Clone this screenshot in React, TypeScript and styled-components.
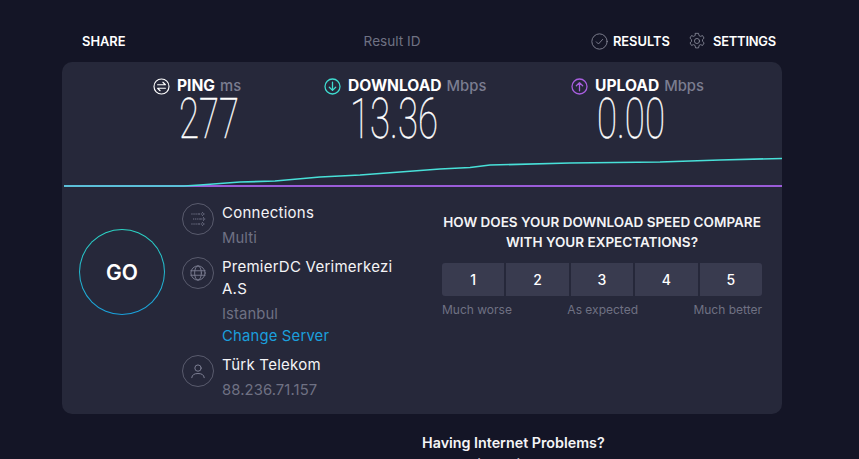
import React from "react";
import styled, { createGlobalStyle } from "styled-components";

const Global = createGlobalStyle`
  *, *::before, *::after { box-sizing: border-box; }
  html, body { margin: 0; padding: 0; height: 459px; overflow: hidden; background: #141526; }
  body { font-family: Inter, "Noto Sans", sans-serif; color: #fff; }
`;
const Page = styled.div`
  width: 720px;
  margin-left: 62px;
  height: 459px;
  overflow: hidden;
`;
const Header = styled.header`
  height: 62px;
  display: flex;
  justify-content: space-between;
  align-items: center;
  padding: 20px 6px 0 20px;
`;
const HeaderLeft = styled.div`
  display: flex;
  align-items: center;
`;
const NavLabel = styled.span<{ $tight?: boolean }>`
  font-size: 12.9px;
  font-weight: 600;
  color: #fff;
  letter-spacing: ${(p) => (p.$tight ? "-0.2px" : "0")};
`;
const ResultId = styled.span`
  font-size: 13.6px;
  color: #6f7183;
  margin-left: 238px;
`;
const Nav = styled.nav`
  display: flex;
  align-items: center;
  gap: 18px;
`;
const NavItem = styled.div<{ $gap: number }>`
  display: flex;
  align-items: center;
  gap: ${(p) => p.$gap}px;
`;
const Panel = styled.main`
  height: 352px;
  background: #26283a;
  border-radius: 10px;
  display: flex;
  flex-direction: column;
`;
const Stats = styled.section`
  display: grid;
  grid-template-columns: 171px 247px auto;
  padding: 14px 0 0 91px;
  height: 70px;
  flex-shrink: 0;
`;
const Stat = styled.div`
  display: grid;
  grid-template-columns: 24px auto;
  grid-template-rows: 20px 46px;
  justify-content: start;
  align-items: center;
`;
const StatIcon = styled.span`
  display: flex;
`;
const StatLabel = styled.div`
  display: flex;
  align-items: baseline;
  gap: 5px;
  font-size: 15.6px;
  font-weight: 700;
  line-height: 20px;
  white-space: nowrap;
`;
const Unit = styled.span`
  font-size: 14.8px;
  font-weight: 500;
  color: #7b7d90;
`;
const StatValue = styled.div`
  grid-column: 2;
  font-family: Roboto, sans-serif;
  font-weight: 100;
  font-size: 55px;
  line-height: 46px;
  color: #fff;
  transform: scaleX(0.665);
  transform-origin: left center;
  white-space: nowrap;
  width: 0;
  margin: 0 0 0 2px;
  -webkit-text-stroke: 0.4px #fff;
`;
const Chart = styled.svg`
  display: block;
  flex-shrink: 0;
  width: 720px;
  height: 56px;
  margin-top: -1px;
`;
const Body = styled.section`
  display: flex;
  flex: 1;
  padding: 0 20px 0 17px;
`;
const GoWrap = styled.div`
  width: 103px;
  padding-top: 42px;
`;
const Go = styled.button`
  width: 86px;
  height: 86px;
  border-radius: 50%;
  border: 1px solid transparent;
  background: linear-gradient(#26283a, #26283a) padding-box,
    linear-gradient(#2cd5c4, #1aa0dc) border-box;
  color: #fff;
  font-family: inherit;
  font-size: 21px;
  font-weight: 600;
  padding: 0;
`;
const Servers = styled.div`
  width: 260px;
  padding-top: 15px;
  display: flex;
  flex-direction: column;
  gap: 7px;
`;
const ServerRow = styled.div`
  display: grid;
  grid-template-columns: 32px 1fr;
  column-gap: 8px;
  align-items: start;
`;
const Round = styled.span`
  width: 32px;
  height: 32px;
  border: 1px solid #595b6d;
  border-radius: 50%;
  display: flex;
  align-items: center;
  justify-content: center;
  margin-top: 1px;
`;
const ServerText = styled.div`
  font-size: 15px;
  line-height: 22px;
  letter-spacing: 0.25px;
`;
const Name = styled.div`
  color: #f4f4f6;
  width: 190px;
`;
const Sub = styled.div`
  color: #6f7183;
  font-size: 14.8px;
  letter-spacing: 0.1px;
  margin-top: 3px;
`;
const Change = styled.div`
  color: #1b9fdc;
  font-size: 14.8px;
  letter-spacing: 0.2px;
`;
const Feedback = styled.div`
  width: 320px;
  padding-top: 25px;
`;
const Question = styled.h2`
  margin: 0;
  font-size: 13.5px;
  font-weight: 600;
  line-height: 20px;
  text-align: center;
  color: #f4f4f6;
  white-space: nowrap;
`;
const Scale = styled.div`
  display: grid;
  grid-template-columns: repeat(5, 1fr);
  gap: 2px;
  margin-top: 11px;
  border-radius: 3px;
  overflow: hidden;
`;
const ScaleBtn = styled.div`
  height: 33px;
  background: #393b4f;
  display: flex;
  align-items: center;
  justify-content: center;
  font-size: 14px;
  font-weight: 500;
`;
const ScaleLabels = styled.div`
  display: flex;
  justify-content: space-between;
  margin-top: 7px;
  font-size: 12px;
  line-height: 14px;
  color: #6f7183;
`;
const Help = styled.section`
  margin-top: 20px;
  padding-left: 360px;
  font-size: 14.3px;
  line-height: 18px;
`;
const HelpTitle = styled.div`
  font-weight: 600;
  color: #f4f4f6;
`;
const HelpLine = styled.div`
  color: #f4f4f6;
  font-size: 13px;
  margin-left: -22px;
  margin-top: 3px;
  white-space: nowrap;
`;

const Ic = ({ s, children, c }: { s: number; c: string; children: React.ReactNode }) => (
  <svg width={s} height={s} viewBox="0 0 24 24" fill="none" stroke={c} strokeWidth="1.3" strokeLinecap="round" strokeLinejoin="round">
    {children}
  </svg>
);

const PingIcon = () => (
  <Ic s={17} c="#fff">
    <circle cx="12" cy="12" r="10.6" strokeWidth="1.6" />
    <path d="M6.5 9.5h11L14 6M17.5 14.5h-11l3.5 3.5" strokeWidth="1.6" />
  </Ic>
);
const ArrowIcon = ({ c, up }: { c: string; up?: boolean }) => (
  <Ic s={17} c={c}>
    <circle cx="12" cy="12" r="10.6" strokeWidth="1.8" />
    <path d={up ? "M12 18V6.5M7.5 11 12 6.5l4.5 4.5" : "M12 6v11.5M7.5 13l4.5 4.5 4.5-4.5"} strokeWidth="1.8" />
  </Ic>
);

const teal = "M0 68 H120 L136 67 L176 64 L211 63 L256 59 L296 57 L336 54 L376 51 L406 49.5 L426 47 L506 45 L596 44 L656 42 L718 40.5";

export default function App() {
  return (
    <Page>
      <Global />
      <Header>
        <HeaderLeft>
          <NavLabel>SHARE</NavLabel>
          <ResultId>Result ID</ResultId>
        </HeaderLeft>
        <Nav>
          <NavItem $gap={5}>
            <Ic s={17} c="#8b8d9c">
              <circle cx="12" cy="12" r="10.8" strokeWidth="1.2" />
              <path d="M7.5 12.5l3 3 6-6.5" strokeWidth="1.2" />
            </Ic>
            <NavLabel>RESULTS</NavLabel>
          </NavItem>
          <NavItem $gap={7}>
            <Ic s={18} c="#8b8d9c">
              <path d="M10 1.800h4l.7 3 1.900 1 2.800-1 2 3.400-2.100 2 .1 2.300 2.100 2-2 3.400-2.800-1-1.900 1-.7 3.300h-4l-.7-3.300-1.900-1-2.800 1-2-3.400 2.100-2-.1-2.300-2.100-2 2-3.400 2.800 1 1.900-1z" strokeWidth="1.100" />
              <circle cx="12" cy="12" r="3.400" strokeWidth="1.100" />
            </Ic>
            <NavLabel $tight>SETTINGS</NavLabel>
          </NavItem>
        </Nav>
      </Header>
      <Panel>
        <Stats>
          <Stat>
            <StatIcon><PingIcon /></StatIcon>
            <StatLabel>PING <Unit>ms</Unit></StatLabel>
            <StatValue>277</StatValue>
          </Stat>
          <Stat>
            <StatIcon><ArrowIcon c="#3fdcd0" /></StatIcon>
            <StatLabel>DOWNLOAD <Unit>Mbps</Unit></StatLabel>
            <StatValue>13.36</StatValue>
          </Stat>
          <Stat>
            <StatIcon><ArrowIcon c="#a95fe0" up /></StatIcon>
            <StatLabel>UPLOAD <Unit>Mbps</Unit></StatLabel>
            <StatValue>0.00</StatValue>
          </Stat>
        </Stats>
        <Chart viewBox="0 0 720 56">
          <g transform="translate(2 -13)">
            <path d="M0 68 H718" stroke="#9a5cd8" strokeWidth="2" fill="none" />
            <path d={teal} stroke="#48e0d8" strokeWidth="1.7" fill="none" strokeLinejoin="round" />
          </g>
        </Chart>
        <Body>
          <GoWrap>
            <Go>GO</Go>
          </GoWrap>
          <Servers>
            <ServerRow>
              <Round>
                <Ic s={20} c="#83859a">
                  <path d="M4 6h9M13 6h6M17 4l2.500 2-2.500 2M6 12h9M15 12h5.500M18 10l2.500 2-2.500 2M4 18h9M13 18h6M17 16l2.500 2-2.500 2" strokeWidth="1" strokeDasharray="1.500 1" strokeLinecap="butt" />
                </Ic>
              </Round>
              <ServerText>
                <Name>Connections</Name>
                <Sub>Multi</Sub>
              </ServerText>
            </ServerRow>
            <ServerRow>
              <Round>
                <Ic s={18} c="#83859a">
                  <circle cx="12" cy="12" r="9.500" strokeWidth="1.100" />
                  <ellipse cx="12" cy="12" rx="4.500" ry="9.500" strokeWidth="1.100" />
                  <path d="M2.500 9h19M2.500 15h19" strokeWidth="1.100" />
                </Ic>
              </Round>
              <ServerText>
                <Name>PremierDC Verimerkezi A.S</Name>
                <Sub>Istanbul</Sub>
                <Change>Change Server</Change>
              </ServerText>
            </ServerRow>
            <ServerRow>
              <Round>
                <Ic s={20} c="#83859a">
                  <circle cx="12" cy="8.500" r="3.800" strokeWidth="1.100" />
                  <path d="M4.500 20c.5-3.500 3-5 7.500-5s7 1.500 7.500 5" strokeWidth="1.100" />
                </Ic>
              </Round>
              <ServerText>
                <Name>Türk Telekom</Name>
                <Sub>88.236.71.157</Sub>
              </ServerText>
            </ServerRow>
          </Servers>
          <Feedback>
            <Question>
              HOW DOES YOUR DOWNLOAD SPEED COMPARE
              <br />
              WITH YOUR EXPECTATIONS?
            </Question>
            <Scale>
              {[1, 2, 3, 4, 5].map((n) => (
                <ScaleBtn key={n}>{n}</ScaleBtn>
              ))}
            </Scale>
            <ScaleLabels>
              <span>Much worse</span>
              <span>As expected</span>
              <span>Much better</span>
            </ScaleLabels>
          </Feedback>
        </Body>
      </Panel>
      <Help>
        <HelpTitle>Having Internet Problems?</HelpTitle>
        <HelpLine>Popular services with reported problems</HelpLine>
      </Help>
    </Page>
  );
}
